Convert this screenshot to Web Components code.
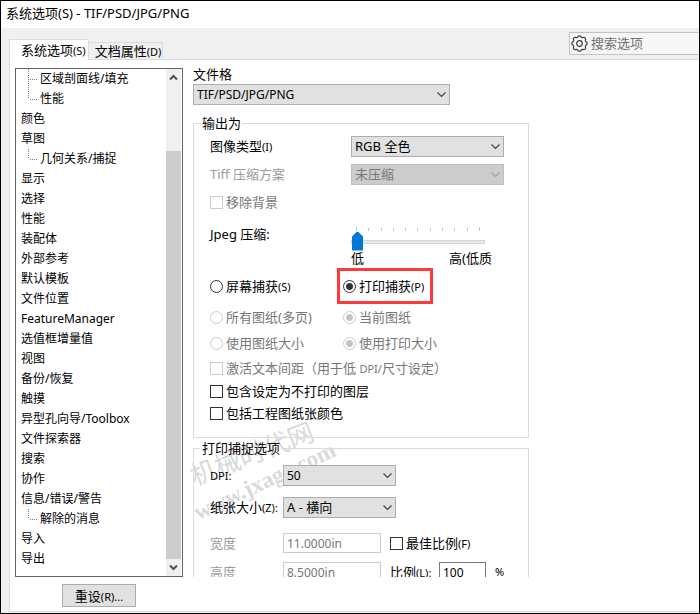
<!DOCTYPE html>
<html lang="zh-CN">
<head>
<meta charset="UTF-8">
<title>系统选项(S) - TIF/PSD/JPG/PNG</title>
<style>
body {
    margin: 0;
    font: 13px/20px "Noto Sans", "Noto Sans CJK SC", sans-serif;
    color: #000;
    background: #fff;
}
</style>
</head>
<body>
<options-dialog></options-dialog>

<script>
const base = `<style>
* { box-sizing: border-box; }
:host { display: block; box-sizing: border-box; white-space: nowrap; }
small { font-size: 11px; }
input, select, button { font-family: inherit; margin: 0; color: inherit; }
</style>`

// label text followed by its small access key
const caption = el => {
    const key = el.getAttribute('key')
    return el.getAttribute('label') + (key ? `<small>${key}</small>` : '')
}

class TreeItem extends HTMLElement {
    constructor() {
        super()
        const branch = this.getAttribute('branch')
        const line = branch ? `<svg width="10" height="20" stroke="#808080" stroke-dasharray="1 1">
            <path d="M.5 0V${branch === 'mid' ? 20 : 10}M2 10.5H10" fill="none"/></svg>` : ''
        this.attachShadow({mode:'open'}).innerHTML = `
        ${base}
        <style>
        :host { display: flex; height: 20px; font-size: 12px; padding-left: 5px; }
        :host([branch]) { padding-left: 12px; gap: 2px; }
        </style>
        ${line}<span><slot></slot></span>
        `
    }
}
customElements.define('tree-item', TreeItem)

class OptionTree extends HTMLElement {
    constructor() {
        super()
        this.attachShadow({mode:'open'}).innerHTML = `
        ${base}
        <style>
        :host { display: flex; border: 1px solid #646464; background: #fff; padding-right: 1px; }
        .items { flex: 1; padding-bottom: 7px; }
        .bar { width: 15px; display: flex; flex-direction: column; background: #f0f0f0; }
        .bar button { height: 17px; border: 0; padding: 0; background: none; display: grid; place-items: center; }
        .track { flex: 1; padding-top: 65px; display: flex; }
        .thumb { flex: 1; background: #cdcdcd; }
        </style>
        <div class="items" role="tree"><slot></slot></div>
        <div class="bar">
            <button aria-label="向上"><svg width="9" height="7"><path d="M1 5.5L4.5 2L8 5.5" fill="none" stroke="#505050" stroke-width="2"/></svg></button>
            <div class="track"><div class="thumb"></div></div>
            <button aria-label="向下"><svg width="9" height="7"><path d="M1 1.5L4.5 5L8 1.5" fill="none" stroke="#505050" stroke-width="2"/></svg></button>
        </div>
        `
    }
}
customElements.define('option-tree', OptionTree)

class DropDown extends HTMLElement {
    constructor() {
        super()
        this.attachShadow({mode:'open'}).innerHTML = `
        ${base}
        <style>
        :host { display: flex; align-items: center; }
        :host([stacked]) { flex-direction: column; align-items: flex-start; }
        label { width: var(--label, 141px); }
        .box { display: grid; width: var(--box, 153px); }
        select, svg { grid-area: 1 / 1; }
        select { appearance: none; height: 21px; border: 1px solid #adadad; border-radius: 0; background: #e1e1e1; padding: 0 3px; font-size: var(--size, 13px); line-height: 19px; }
        svg { justify-self: end; align-self: center; margin-right: 4px; pointer-events: none; stroke: #444; }
        :host([disabled]) label { color: #9b9b9b; }
        :host([disabled]) select { background: #ccc; border-color: #bfbfbf; color: #777; opacity: 1; }
        :host([disabled]) svg { stroke: #a0a0a0; }
        </style>
        <label for="s">${caption(this)}</label>
        <div class="box">
            <select id="s" ${this.hasAttribute('disabled') ? 'disabled' : ''}><option>${this.getAttribute('value')}</option></select>
            <svg width="9" height="7"><path d="M.5 1.5L4.5 5.5L8.5 1.5" fill="none" stroke-width="1.2"/></svg>
        </div>
        `
    }
}
customElements.define('drop-down', DropDown)

// check box or radio button, by its type attribute
class CheckMark extends HTMLElement {
    constructor() {
        super()
        const flags = ['checked', 'disabled'].filter(f => this.hasAttribute(f)).join(' ')
        this.attachShadow({mode:'open'}).innerHTML = `
        ${base}
        <style>
        :host { display: flex; }
        label { display: flex; align-items: center; gap: 3px; }
        input { appearance: none; width: 13px; height: 13px; border: 1px solid #333; background: #fff; flex: none; }
        input[type=radio] { border-radius: 50%; }
        input[type=radio]:checked { background: radial-gradient(circle, #333 3px, #fff 4px); }
        :host([disabled]) { color: #777; }
        input:disabled { border-color: #ccc; }
        input[type=radio]:disabled:checked { background: radial-gradient(circle, #c4c4c4 3px, #fff 4px); }
        </style>
        <label><input type="${this.getAttribute('type')}" ${flags}><span>${caption(this)}</span></label>
        `
    }
}
customElements.define('check-mark', CheckMark)

class TextField extends HTMLElement {
    constructor() {
        super()
        this.attachShadow({mode:'open'}).innerHTML = `
        ${base}
        <style>
        :host { display: flex; align-items: center; }
        label { width: var(--label, 73px); }
        input { width: var(--box, 98px); height: 20px; border: 1px solid #7a7a7a; background: #fff; padding: 0 3px; font-size: 12px; }
        :host([disabled]) { color: #9b9b9b; }
        input:disabled { border-color: #ccc; color: #777; }
        </style>
        <label for="t">${caption(this)}</label>
        <input id="t" value="${this.getAttribute('value')}" ${this.hasAttribute('disabled') ? 'disabled' : ''}>
        `
    }
}
customElements.define('text-field', TextField)

class QualitySlider extends HTMLElement {
    constructor() {
        super()
        const ticks = '<i></i>'.repeat(11)
        this.attachShadow({mode:'open'}).innerHTML = `
        ${base}
        <style>
        :host { display: flex; padding-top: 8px; height: 52px; }
        label { width: 141px; }
        .slider { width: 141px; padding-top: 3px; }
        .ticks { display: flex; justify-content: space-between; height: 5px; padding: 0 12px 0 5px; }
        i { width: 1px; height: 3px; margin-top: 1px; background: #c4c4c4; }
        i:first-child, i:last-child { height: 4px; margin: 0; }
        input { appearance: none; display: block; width: 134px; height: 19px; background: none; }
        input::-webkit-slider-runnable-track { height: 4px; background: #e7eaea; border: 1px solid #d6d6d6; }
        input::-webkit-slider-thumb { appearance: none; width: 11px; height: 19px; margin-top: -9px; background: #0078d7; clip-path: polygon(0 5px, 5px 0, 6px 0, 11px 5px, 11px 100%, 0 100%); }
        .ends { display: flex; justify-content: space-between; line-height: 14px; }
        </style>
        <label for="q">${caption(this)}</label>
        <div class="slider">
            <div class="ticks">${ticks}</div>
            <input id="q" type="range" min="0" max="10" value="0">
            <div class="ends"><span>低</span><span>高(低质</span></div>
        </div>
        `
    }
}
customElements.define('quality-slider', QualitySlider)

class OptionGroup extends HTMLElement {
    constructor() {
        super()
        this.attachShadow({mode:'open'}).innerHTML = `
        ${base}
        <style>
        :host { width: 336px; }
        fieldset { margin: 0; border: 1px solid #dcdcdc; padding: 0 0 13px 16px; }
        legend { margin-left: -9px; padding: 0 1px; line-height: 18px; }
        </style>
        <fieldset><legend>${this.getAttribute('label')}</legend><slot></slot></fieldset>
        `
    }
}
customElements.define('option-group', OptionGroup)

class SearchBox extends HTMLElement {
    constructor() {
        super()
        this.attachShadow({mode:'open'}).innerHTML = `
        ${base}
        <style>
        :host { display: flex; align-items: center; gap: 3px; width: 130px; height: 23px; padding-left: 1px; border: 1px solid #c3c3c3; border-right: 0; background: #f6f6f6; }
        input { width: 100px; border: 0; padding: 0 0 2px; background: none; font-size: 13px; outline: 0; }
        input::placeholder { color: #707070; }
        </style>
        <svg width="17" height="17" viewBox="0 0 17 17" fill="none" stroke="#3c3c3c" stroke-width="1.2">
            <path d="M6.6 2.2Q7 .8 8.5 .8T10.4 2.2Q11 3 11.7 2.6Q13.2 1.9 14.1 2.9T14.4 5.3Q14 6 14.8 6.6Q16.2 7 16.2 8.5T14.8 10.4Q14 11 14.4 11.7Q15.1 13.2 14.1 14.1T11.7 14.4Q11 14 10.4 14.8Q10 16.2 8.5 16.2T6.6 14.8Q6 14 5.3 14.4Q3.8 15.1 2.9 14.1T2.6 11.7Q3 11 2.2 10.4Q.8 10 .8 8.5T2.2 6.6Q3 6 2.6 5.3Q1.9 3.8 2.9 2.9T5.3 2.6Q6 3 6.6 2.2Z"/>
            <circle cx="8.5" cy="8.5" r="2.8"/>
        </svg>
        <input type="text" placeholder="搜索选项" aria-label="搜索选项">
        `
    }
}
customElements.define('search-box', SearchBox)

class OptionsDialog extends HTMLElement {
    constructor() {
        super()
        this.attachShadow({mode:'open'}).innerHTML = `
        ${base}
        <style>
        :host { position: relative; display: flex; flex-direction: column; min-height: 100vh; border: 1px solid #000; background: #f0f0f0; overflow: hidden; }
        .title { height: 27px; padding: 2px 5px; background: #fff; }
        .strip { display: flex; height: 32px; padding-left: 8px; }
        .tabs { display: flex; align-items: flex-end; flex: 1; }
        .tabs button { height: 18px; padding: 0 1px 0 6px; border: 1px solid #dcdcdc; border-width: 1px 1px 0 0; background: #f0f0f0; font-size: 13px; line-height: 16px; }
        .tabs button.on { height: 21px; padding: 0 2px 0 11px; border-left-width: 1px; background: #fff; z-index: 1; }
        search-box { margin-top: 4px; }
        .page { flex: 1; display: grid; grid-template-columns: 168px 1fr; grid-template-rows: auto 1fr; column-gap: 10px; margin: -1px 0 1px 8px; padding-left: 5px; border: 1px solid #dcdcdc; border-right: 0; background: #fff; }
        option-tree { margin-top: 8px; }
        .settings { contain: size; z-index: 1; overflow: hidden; padding-top: 4px; }
        .top { --box: 257px; --label: auto; --size: 12px; margin-bottom: 9px; }
        .reset { align-self: start; justify-self: center; width: 74px; height: 23px; margin: 7px 0 0 0; padding: 0; border: 1px solid #adadad; background: #e1e1e1; font-size: 13px; }
        .row { display: grid; grid-template-columns: 127px 1fr; align-items: center; height: 26px; }
        .row > :last-child { padding-left: 6px; }
        .row.main { height: 36px; }
        .row > .mark { justify-self: start; height: 36px; display: flex; align-items: center; padding: 0 6px 0 3px; border: 3px solid #fb3b3b; }
        .h22 { height: 22px; }
        .h24 { height: 24px; }
        .h28 { height: 28px; }
        .h36 { height: 36px; }
        .paper { --label: 73px; --box: 113px; }
        .dpi { --size: 12px; }
        .size { display: flex; align-items: center; gap: 9px; --box: 98px; }
        .first { margin: 8px 0 1px; }
        .ratio { --label: 49px; --box: 47px; }
        .print { margin-top: 1px; }
        .stamp { position: absolute; left: 180px; top: 433px; transform: rotate(-25deg); color: rgba(120, 120, 120, .3); font: bold 23px/30px "Liberation Serif", serif; pointer-events: none; }
        .stamp span { display: block; text-align: center; transform: rotate(4deg); font: 26px/34px "Noto Sans CJK SC", sans-serif; }
        </style>
        <div class="title">系统选项(S) - TIF/PSD/JPG/PNG</div>
        <div class="strip">
            <div class="tabs">
                <button class="on">系统选项<small>(S)</small></button>
                <button>文档属性<small>(D)</small></button>
            </div>
            <search-box></search-box>
        </div>
        <div class="page">
            <option-tree>
                <tree-item branch="mid">区域剖面线/填充</tree-item>
                <tree-item branch="end">性能</tree-item>
                <tree-item>颜色</tree-item>
                <tree-item>草图</tree-item>
                <tree-item branch="end">几何关系/捕捉</tree-item>
                <tree-item>显示</tree-item>
                <tree-item>选择</tree-item>
                <tree-item>性能</tree-item>
                <tree-item>装配体</tree-item>
                <tree-item>外部参考</tree-item>
                <tree-item>默认模板</tree-item>
                <tree-item>文件位置</tree-item>
                <tree-item>FeatureManager</tree-item>
                <tree-item>选值框增量值</tree-item>
                <tree-item>视图</tree-item>
                <tree-item>备份/恢复</tree-item>
                <tree-item>触摸</tree-item>
                <tree-item>异型孔向导/Toolbox</tree-item>
                <tree-item>文件探索器</tree-item>
                <tree-item>搜索</tree-item>
                <tree-item>协作</tree-item>
                <tree-item>信息/错误/警告</tree-item>
                <tree-item branch="end">解除的消息</tree-item>
                <tree-item>导入</tree-item>
                <tree-item>导出</tree-item>
            </option-tree>
            <div class="settings">
                <drop-down class="top" stacked label="文件格" value="TIF/PSD/JPG/PNG"></drop-down>
                <option-group label="输出为">
                    <drop-down class="h28" label="图像类型" key="(I)" value="RGB 全色"></drop-down>
                    <drop-down class="h28" label="Tiff 压缩方案" value="未压缩" disabled></drop-down>
                    <check-mark class="h28" type="checkbox" label="移除背景" disabled></check-mark>
                    <quality-slider label="Jpeg 压缩:"></quality-slider>
                    <div class="row main">
                        <check-mark type="radio" label="屏幕捕获" key="(S)"></check-mark>
                        <div class="mark"><check-mark type="radio" label="打印捕获" key="(P)" checked></check-mark></div>
                    </div>
                    <div class="row">
                        <check-mark type="radio" label="所有图纸(多页)" disabled></check-mark>
                        <check-mark type="radio" label="当前图纸" checked disabled></check-mark>
                    </div>
                    <div class="row">
                        <check-mark type="radio" label="使用图纸大小" disabled></check-mark>
                        <check-mark type="radio" label="使用打印大小" checked disabled></check-mark>
                    </div>
                    <check-mark class="h24" type="checkbox" label="激活文本间距（用于低 <small>DPI/</small>尺寸设定）" disabled></check-mark>
                    <check-mark class="h22" type="checkbox" label="包含设定为不打印的图层"></check-mark>
                    <check-mark class="h22" type="checkbox" label="包括工程图纸张颜色"></check-mark>
                </option-group>
                <option-group class="print" label="打印捕捉选项">
                    <drop-down class="paper dpi h36" label="<small>DPI:</small>" value="50"></drop-down>
                    <drop-down class="paper h28" label="纸张大小" key="(Z):" value="A - 横向"></drop-down>
                    <div class="size h28 first">
                        <text-field label="宽度" value="11.0000in" disabled></text-field>
                        <check-mark type="checkbox" label="最佳比例" key="(F)"></check-mark>
                    </div>
                    <div class="size h28">
                        <text-field label="高度" value="8.5000in" disabled></text-field>
                        <text-field class="ratio" label="比例" key="(L):" value="100"></text-field>
                        <small>%</small>
                    </div>
                </option-group>
            </div>
            <button class="reset">重设<small>(R)...</small></button>
        </div>
        <div class="stamp"><span>机械时代网</span>www.jxage.com</div>
        `
    }
}
customElements.define('options-dialog', OptionsDialog)
</script>
</body>
</html>
